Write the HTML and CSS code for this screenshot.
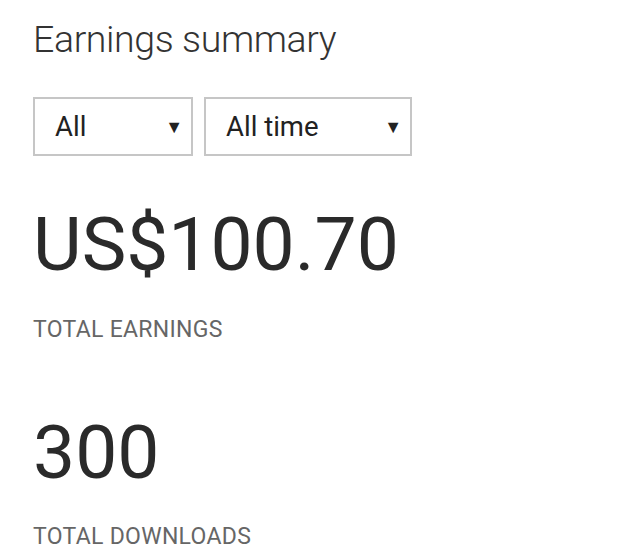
FILE: index.html
```html
<!DOCTYPE html>
<html lang="en">
<head>
  <meta charset="UTF-8" />
  <title>Earnings summary</title>
  <link rel="stylesheet" href="styles.css">
</head>
<body>

  <!-- Header -->
  <h1 class="title">Earnings summary</h1>

  <!-- Filters -->
  <div class="filters">
    <div class="dropdown dropdown-type">
      <span>All</span>
      <span class="arrow">&#9660;</span>
    </div>
    <div class="dropdown dropdown-range">
      <span>All time</span>
      <span class="arrow">&#9660;</span>
    </div>
  </div>

  <!-- Stats -->
  <div class="stat stat-earnings">
    <div class="stat-value">US$100.70</div>
    <div class="stat-label">TOTAL EARNINGS</div>
  </div>

  <div class="stat stat-downloads">
    <div class="stat-value">300</div>
    <div class="stat-label">TOTAL DOWNLOADS</div>
  </div>

</body>
</html>
```

FILE: styles.css
```css
body {
  margin: 0;
  padding: 0 20px 0 33px;
  font-family: Roboto, "Liberation Sans", sans-serif;
  background-color: #ffffff;
  color: #2b2b2b;
}

/* Header */
.title {
  margin: 0;
  padding-top: 17px;
  font-size: 37.5px;
  line-height: 44px;
  font-weight: 300;
  color: #333;
  letter-spacing: -0.4px;
}

/* Filters */
.filters {
  display: flex;
  gap: 11px;
  margin-top: 36px;
}

.dropdown {
  box-sizing: border-box;
  height: 59px;
  border: 2px solid #c6c6c6;
  display: flex;
  align-items: center;
  justify-content: space-between;
  padding: 0 8px 0 20px;
  font-size: 27.5px;
  color: #222;
}

.dropdown-type {
  width: 160px;
}

.dropdown-range {
  width: 208px;
}

.arrow {
  font-size: 18px;
  color: #222;
}

/* Stats */
.stat-value {
  font-size: 75px;
  line-height: 80px;
  color: #2a2a2a;
}

.stat-label {
  font-size: 23px;
  line-height: 26px;
  color: #666;
  letter-spacing: 0.3px;
}

.stat-earnings {
  margin-top: 48px;
}

.stat-earnings .stat-label {
  margin-top: 33px;
}

.stat-downloads {
  margin-top: 69px;
}

.stat-downloads .stat-label {
  margin-top: 32px;
}
```
